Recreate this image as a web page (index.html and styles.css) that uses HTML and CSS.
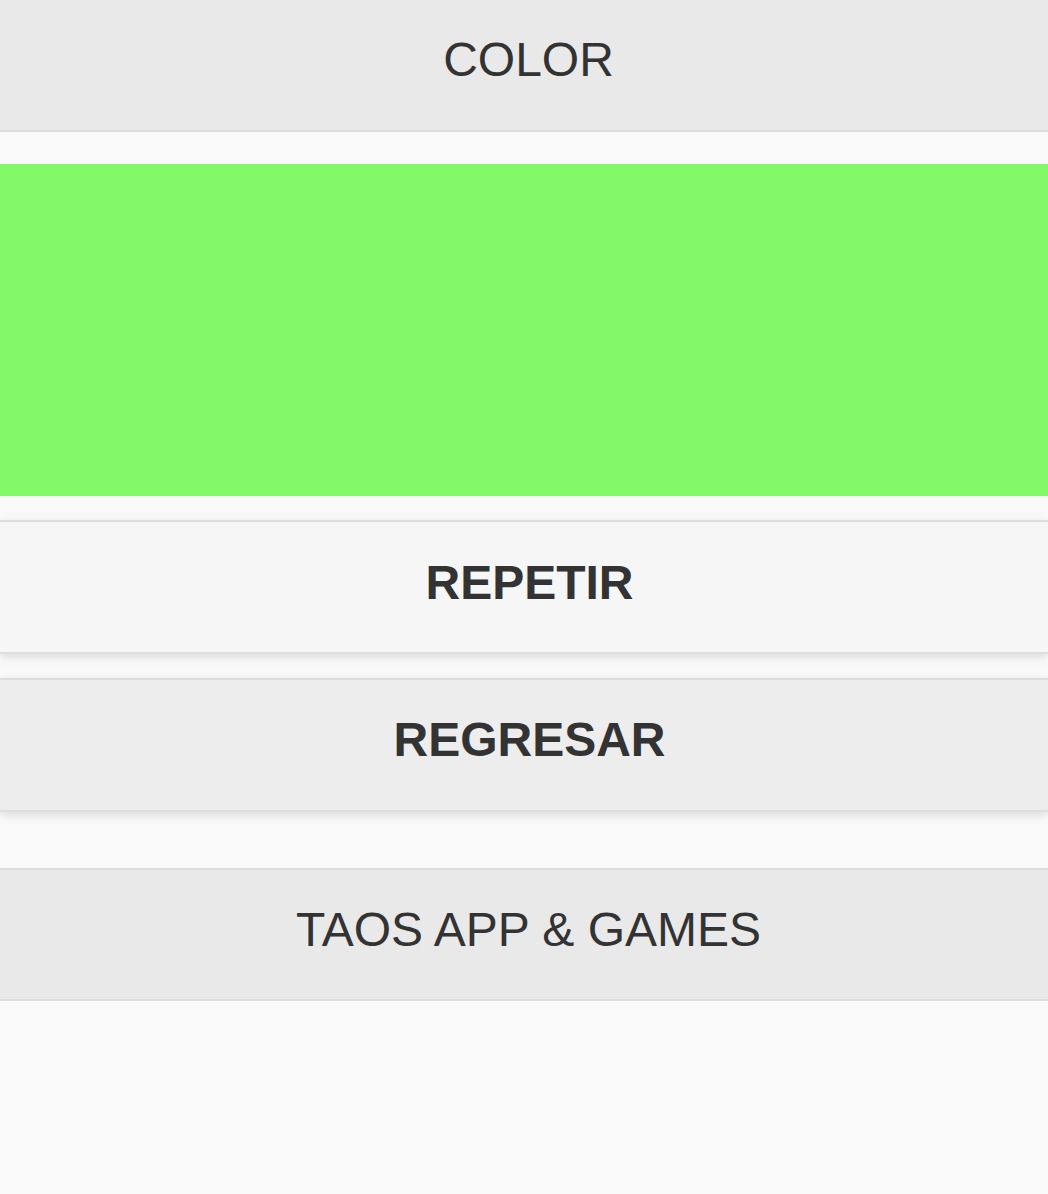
FILE: index.html
```html
<!DOCTYPE html>
<html lang="es">
<head>
<meta charset="utf-8">
<title>COLOR</title>
<link rel="stylesheet" href="styles.css">
</head>
<body>
<div class="page">
  <header class="bar header"><h1 class="bar-title">COLOR</h1></header>
  <main class="content">
    <div class="swatch"></div>
    <a class="btn btn-repeat" href="#">REPETIR</a>
    <a class="btn btn-back" href="#">REGRESAR</a>
  </main>
  <footer class="bar footer"><h4 class="bar-title">TAOS APP &amp; GAMES</h4></footer>
</div>
</body>
</html>
```
FILE: styles.css
```css
html, body {
  margin: 0;
  padding: 0;
  background: #f9f9f9;
}
body {
  font-family: "Liberation Sans", Arial, Helvetica, sans-serif;
  color: #333;
}
.page {
  display: flex;
  flex-direction: column;
}
.bar {
  background: #e9e9e9;
  border-color: #dddddd;
  border-style: solid;
  border-width: 0;
}
.header {
  border-bottom-width: 2px;
}
.footer {
  border-top-width: 2px;
  border-bottom-width: 2px;
  margin-top: 56px;
}
.bar-title {
  margin: 0;
  padding: 0 0 10px 9px;
  font-size: 48px;
  font-weight: normal;
  line-height: 120px;
  text-align: center;
}
.footer .bar-title {
  padding-bottom: 9px;
}
.content {
  display: flex;
  flex-direction: column;
  padding-top: 32px;
}
.swatch {
  height: 332px;
  background: #82f967;
}
.btn {
  display: block;
  margin-top: 24px;
  padding: 0 0 10px 11px;
  border-top: 2px solid #dddddd;
  border-bottom: 2px solid #dddddd;
  font-size: 48px;
  font-weight: bold;
  line-height: 120px;
  text-align: center;
  color: #333;
  text-decoration: none;
  box-shadow: 0 3px 9px rgba(0, 0, 0, 0.12);
}
.btn-repeat {
  background: #f6f6f6;
  padding-bottom: 8px;
  line-height: 122px;
}
.btn-back {
  background: #ededed;
}
```
